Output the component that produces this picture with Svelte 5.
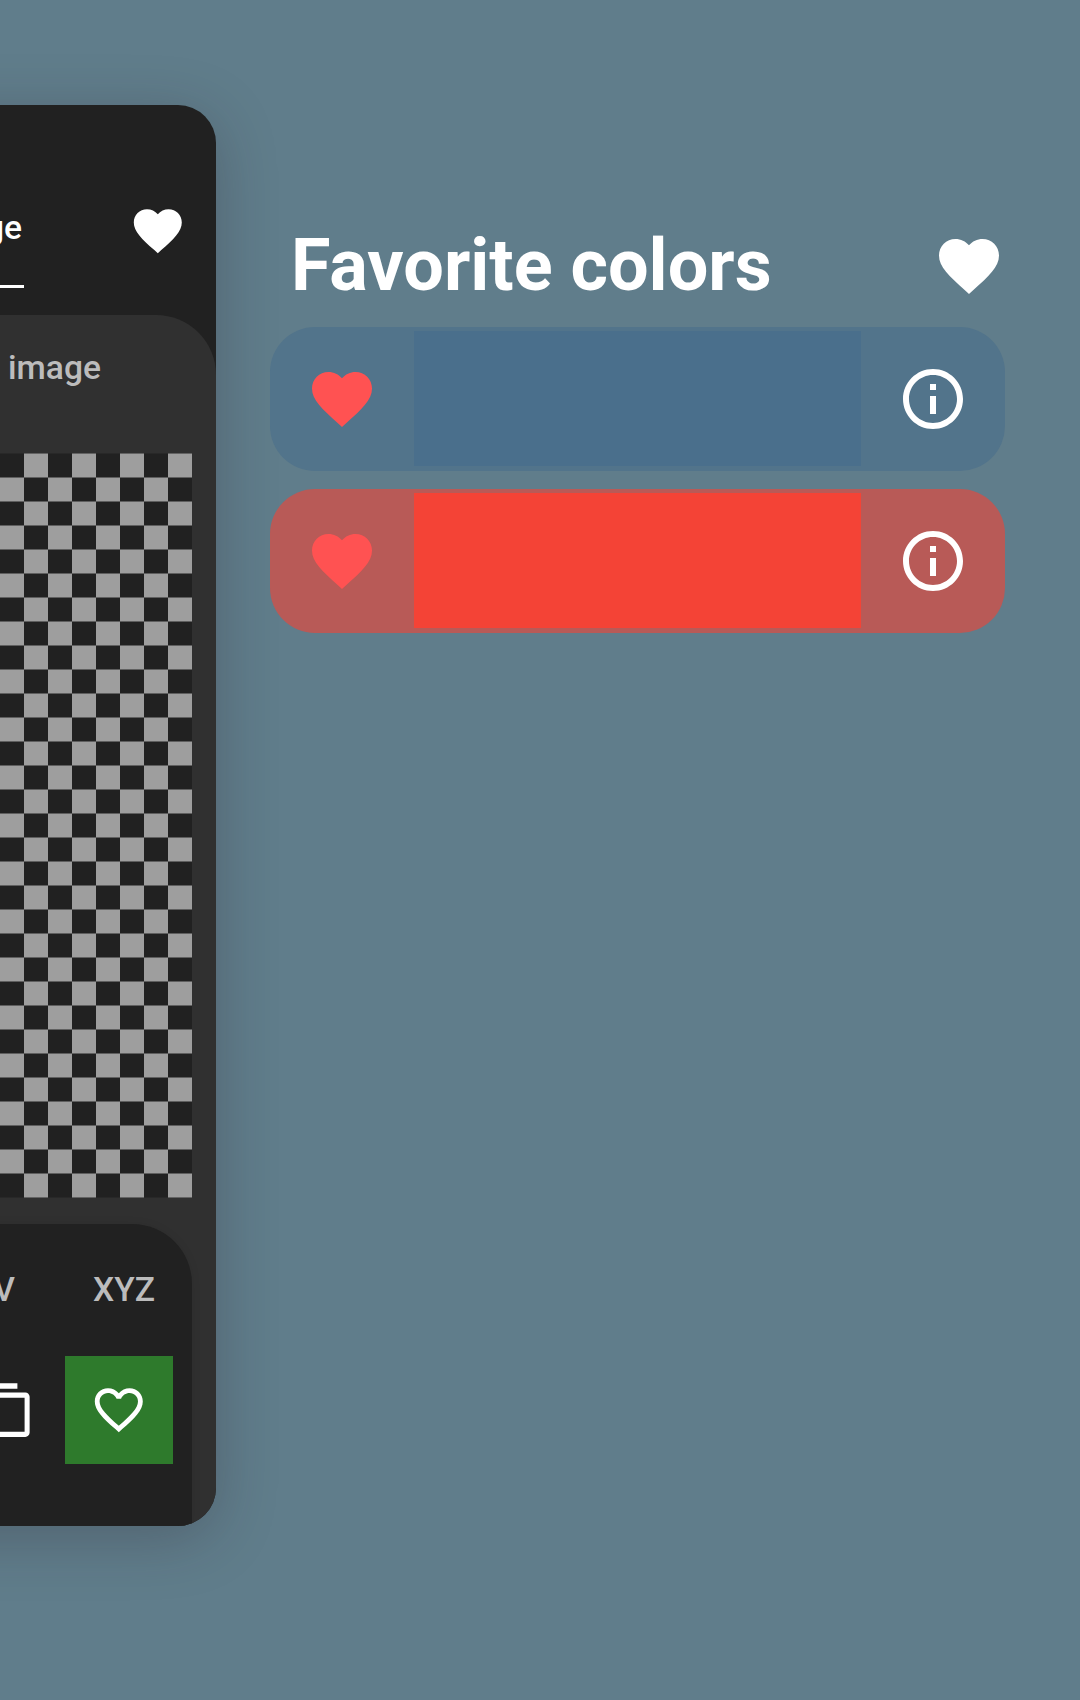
<script>
  const heart =
    'M12 21.35l-1.45-1.32C5.4 15.36 2 12.28 2 8.5 2 5.42 4.42 3 7.5 3c1.74 0 3.41.81 4.5 2.09C13.09 3.81 14.76 3 16.5 3 19.58 3 22 5.42 22 8.5c0 3.78-3.4 6.86-8.55 11.54L12 21.35z';
  const heartOutline =
    'M16.5 3c-1.74 0-3.41.81-4.5 2.09C10.91 3.81 9.24 3 7.5 3 4.42 3 2 5.42 2 8.5c0 3.78 3.4 6.86 8.55 11.54L12 21.35l1.45-1.32C18.6 15.36 22 12.28 22 8.5 22 5.42 19.58 3 16.5 3zm-4.4 15.55l-.1.1-.1-.1C7.14 14.24 4 11.39 4 8.5 4 6.5 5.5 5 7.5 5c1.54 0 3.04.99 3.57 2.36h1.87C13.46 5.99 14.96 5 16.5 5c2 0 3.5 1.5 3.5 3.5 0 2.89-3.14 5.74-7.9 10.05z';
  const copy =
    'M16 .9H4c-1.1 0-2 .9-2 2v14h2V3.2h12V.9zm3.3 3.9H8c-1.1 0-2 .9-2 2v14.5c0 1.1.9 2 2 2h11.3c1 0 1.8-.8 1.8-1.8V6.6c0-1-.8-1.8-1.8-1.8zM19 21.1H8V7h11v14.1z';
  const info =
    'M11 7h2v2h-2zm0 4h2v6h-2zm1-9C6.48 2 2 6.48 2 12s4.48 10 10 10 10-4.48 10-10S17.52 2 12 2zm0 18c-4.41 0-8-3.59-8-8s3.59-8 8-8 8 3.59 8 8-3.59 8-8 8z';

  const favorites = [
    { name: 'blue', label: 'Steel blue' },
    { name: 'red', label: 'Red' }
  ];

  // Light squares of the transparency checkerboard
  let squares = '';
  for (let row = 0; row < 31; row++) {
    for (let col = (row + 1) % 2; col < 8; col += 2) {
      squares += `M${col * 24} ${row * 24 + 0.5}h24v24h-24z`;
    }
  }
</script>

{#snippet icon(path, size)}
  <svg class={size} viewBox="0 0 24 24" aria-hidden="true"><path d={path} /></svg>
{/snippet}

<div class="page">
  <section class="phone">
    <header class="tabs">
      <span class="tab">Image</span>
      <span class="tab-heart">{@render icon(heart, 'small')}</span>
    </header>
    <div class="panel">
      <p class="hint">image</p>
      <svg class="checker" viewBox="0 0 192 745" aria-hidden="true">
        <rect class="dark" y="0.5" width="192" height="744" />
        <path class="light" d={squares} />
      </svg>
      <div class="sheet">
        <div class="models"><span>HSV</span><span>XYZ</span></div>
        <div class="actions">
          <span class="copy">{@render icon(copy, 'small')}</span>
          <span class="save">{@render icon(heartOutline, 'small')}</span>
        </div>
      </div>
    </div>
  </section>

  <main class="favorites">
    <header class="title">
      <h1>Favorite colors</h1>
      {@render icon(heart, 'large')}
    </header>
    {#each favorites as color}
      <div class="row {color.name}">
        <button class="like" aria-label="Remove favorite">{@render icon(heart, 'large')}</button>
        <div class="swatch"></div>
        <button aria-label={color.label}>{@render icon(info, 'large')}</button>
      </div>
    {/each}
  </main>
</div>

<style>
  :global(body) {
    margin: 0;
    background: #607d8b;
  }
  .page {
    box-sizing: border-box;
    width: 1080px;
    height: 1700px;
    display: flex;
    align-items: flex-start;
    overflow: hidden;
    background: #607d8b;
    color: #fff;
    font-family: Roboto, sans-serif;
  }
  svg {
    display: block;
    flex: none;
    fill: currentColor;
  }
  .small {
    width: 57.6px;
    height: 57.6px;
  }
  .large {
    width: 72px;
    height: 72px;
  }

  .phone {
    flex: none;
    width: 316px;
    height: 1421px;
    margin: 105px 0 0 -100px;
    display: flex;
    flex-direction: column;
    overflow: hidden;
    border-radius: 38px;
    background: #212121;
    box-shadow: 0 12px 60px rgba(40, 28, 36, 0.27);
    font-size: 33.6px;
    font-weight: 500;
  }
  .tabs {
    height: 209.5px;
    display: flex;
    justify-content: flex-end;
  }
  .tab {
    box-sizing: border-box;
    height: 183px;
    padding: 103px 2px 0 0;
    line-height: 40px;
    border-bottom: 3px solid #fff;
  }
  .tab-heart {
    padding: 96.8px 29px 0 105.4px;
  }
  .panel {
    flex: 1;
    display: flex;
    flex-direction: column;
    align-items: flex-end;
    border-top-right-radius: 60px;
    background: #303030;
  }
  .hint {
    margin: 0;
    height: 138.5px;
    box-sizing: border-box;
    padding: 33px 115px 0 0;
    line-height: 40px;
    color: #bcbcbc;
  }
  .checker {
    width: 192px;
    height: 745px;
    margin-right: 24px;
  }
  .dark {
    fill: #212121;
  }
  .light {
    fill: #9e9e9e;
  }
  .sheet {
    flex: 1;
    width: 292px;
    margin: 25.5px 24px 0 0;
    display: flex;
    flex-direction: column;
    align-items: flex-end;
    border-top-right-radius: 60px;
    background: #212121;
    box-shadow: 0 0 10px rgba(0, 0, 0, 0.08);
  }
  .models {
    display: flex;
    gap: 78px;
    height: 132.7px;
    box-sizing: border-box;
    padding: 46px 37px 0 0;
    line-height: 40px;
    color: #bcbcbc;
  }
  .actions {
    display: flex;
    align-items: center;
    padding-right: 19px;
  }
  .copy {
    margin-right: 28.6px;
  }
  .save {
    width: 108px;
    height: 108px;
    display: grid;
    place-items: center;
    background: #2e7a2c;
  }

  .favorites {
    width: 735px;
    margin: 230px 0 0 54px;
    display: flex;
    flex-direction: column;
    gap: 18px;
  }
  .title {
    display: flex;
    justify-content: space-between;
    align-items: flex-start;
    height: 78.7px;
    padding-left: 21px;
  }
  h1 {
    margin: -6px 0 0;
    font-size: 72px;
    line-height: 84px;
    font-weight: 700;
    white-space: nowrap;
  }
  .row {
    display: flex;
    align-items: flex-start;
    height: 144px;
    border-radius: 45px;
  }
  .blue {
    background: #52748b;
  }
  .red {
    background: #b85a57;
  }
  .swatch {
    flex: 1;
    height: 135px;
    margin-top: 4px;
  }
  .blue .swatch {
    background: #4a6f8c;
  }
  .red .swatch {
    background: #f44336;
  }
  button {
    width: 144px;
    height: 144px;
    padding: 0;
    border: 0;
    display: grid;
    place-items: center;
    background: none;
    color: #fff;
  }
  .like {
    color: #ff5252;
  }
</style>
